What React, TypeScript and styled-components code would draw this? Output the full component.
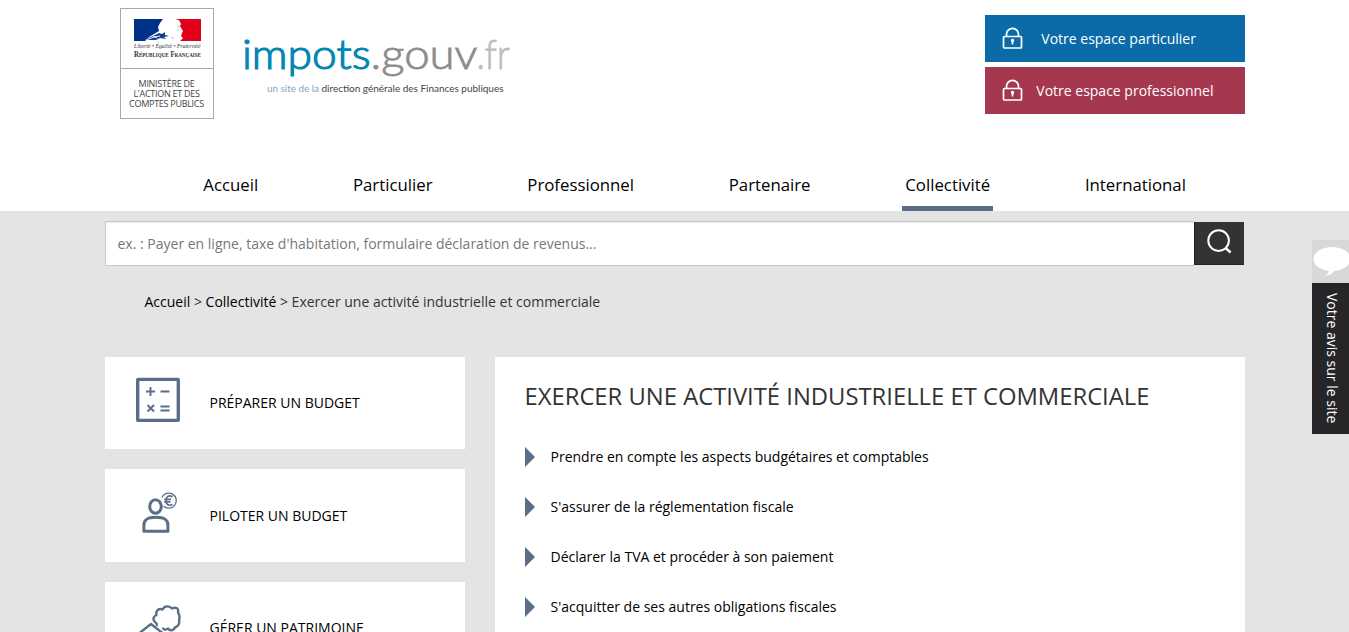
import React from "react";
import styled, { createGlobalStyle } from "styled-components";

const slate = "#5a6e87";

const GlobalStyle = createGlobalStyle`
  * { box-sizing: border-box; }
  body { margin: 0; background: #e4e4e4; color: #333; font: 14px/20px "Open Sans", sans-serif; overflow: hidden; }
  a { color: #000; text-decoration: none; }
  ul { list-style: none; margin: 0; padding: 0; }
  svg { display: block; overflow: visible; }
`;

const Page = styled.div`
  height: 632px;
  overflow: hidden;
  position: relative;
`;

const Header = styled.header`
  height: 211px;
  padding: 8px 104px 0 120px;
  background: #fff;
  display: flex;
  flex-direction: column;
  justify-content: space-between;
`;

const Banner = styled.div`
  display: flex;
  align-items: flex-start;
`;

const Ministry = styled.div`
  width: 94px;
  height: 111px;
  border: 1px solid #a9a9a9;
`;

const Emblem = styled.div`
  height: 60px;
  padding: 10px 0 0 13px;
  border-bottom: 1px solid #a9a9a9;
`;

const MinistryName = styled.div`
  padding: 10px 1px 0 0;
  text-align: center;
  font-size: 9px;
  line-height: 10px;
  letter-spacing: -0.28px;
  color: #444;
`;

const SiteLogo = styled.div`
  margin: 22px 0 0 24px;
`;

const Spaces = styled.div`
  margin: 7px 0 0 auto;
  display: flex;
  flex-direction: column;
  gap: 5px;
`;

const SpaceLink = styled.a<{ $color: string; $gap: number }>`
  width: 260px;
  height: 47px;
  padding-left: 17px;
  display: flex;
  align-items: center;
  gap: ${(p) => p.$gap}px;
  background: ${(p) => p.$color};
  color: #fff;
`;

const Nav = styled.nav`
  padding-left: 80.3px;
  display: flex;
  gap: 88.75px;
`;

const NavLink = styled.a<{ $active?: boolean }>`
  height: 38px;
  padding: 0 3px;
  font-size: 16.8px;
  line-height: 24px;
  border-bottom: 5px solid ${(p) => (p.$active ? slate : "transparent")};
`;

const Main = styled.main`
  padding: 10px 104px 0 105px;
`;

const Search = styled.form`
  display: flex;
  height: 45px;
  width: 1139px;
`;

const SearchInput = styled.input`
  flex: 1;
  padding: 0 11.5px;
  border: 1px solid #c8c8c8;
  border-right: 0;
  background: #fff;
  box-shadow: inset 0 1px 1px rgba(0, 0, 0, 0.08);
  font: 14px "Open Sans", sans-serif;
  &::placeholder { color: #777; opacity: 1; }
`;

const SearchButton = styled.button`
  width: 50px;
  height: 43px;
  margin-top: 1px;
  padding: 0 0 2px 12px;
  border: 1px solid #222;
  border-width: 0 0 1px 1px;
  background: #333;
`;

const Breadcrumb = styled.div`
  margin: 26px 0 45px 39.5px;
`;

const Columns = styled.div`
  display: flex;
  align-items: flex-start;
  gap: 30px;
`;

const Sidebar = styled.aside`
  width: 360px;
  display: flex;
  flex-direction: column;
  gap: 20px;
`;

const Card = styled.a<{ $height: number }>`
  height: ${(p) => p.$height}px;
  padding-left: 30px;
  display: flex;
  gap: 28.5px;
  background: #fff;
`;

const CardIcon = styled.div`
  width: 46px;
  padding-top: 20px;
`;

const CardLabel = styled.span<{ $top: number }>`
  padding-top: ${(p) => p.$top}px;
`;

const Content = styled.section`
  width: 750px;
  height: 400px;
  padding: 23px 30px 0 29.5px;
  background: #fff;
`;

const Title = styled.h1`
  margin: 0 0 34px;
  font-size: 23.8px;
  line-height: 33px;
  font-weight: 400;
  white-space: nowrap;
`;

const TopicList = styled.ul`
  display: flex;
  flex-direction: column;
  gap: 30px;
`;

const Topic = styled.li`
  display: flex;
  align-items: center;
  gap: 15.5px;
  height: 20px;
  padding-left: 0.5px;
  &::before {
    content: "";
    border-left: 10px solid ${slate};
    border-top: 10px solid transparent;
    border-bottom: 10px solid transparent;
  }
`;

const Feedback = styled.a`
  position: absolute;
  top: 240px;
  right: 0;
  width: 37px;
  height: 194px;
  overflow: hidden;
  display: flex;
  flex-direction: column;
  background: #262628;
`;

const FeedbackIcon = styled.div`
  height: 43px;
  background: #d8d8d8;
`;

const FeedbackLabel = styled.span`
  height: 151px;
  width: 37px;
  padding: 10px 0 0 1px;
  writing-mode: vertical-rl;
  line-height: 34px;
  color: #fff;
  white-space: nowrap;
`;

const Flag = () => (
  <svg width="68" height="42" viewBox="0 0 68 42">
    <path fill="#003189" d="M0 0h29l-3 4-2 4 1 4-5 3-5 3-4 4H0z" />
    <path fill="#e1001a" d="M41 0h26v22H46l3-3-2-2 1-3 1-2-3-5 1-2-2-4z" />
    <path fill="#12408f" d="m10 21 9-4 6-3 3 1 3-2v3l4 1-5 1 2 2-6-1-4 2z" />
    <path fill="none" stroke="#fff" strokeWidth=".9" d="m12 21 8-3 6-1M19 17l4 2" />
    <path fill="none" stroke="#a8a8a8" strokeWidth=".7" d="m43 8 3-1M43 11h2M37 18l3 2" />
    <text x="0" y="29" textLength="66.500" lengthAdjust="spacingAndGlyphs" fontFamily="Liberation Serif, serif" fontStyle="italic" fontSize="6.500" fill="#333">Liberté • Égalité • Fraternité</text>
    <text x="0" y="38" textLength="67" lengthAdjust="spacingAndGlyphs" fontFamily="Liberation Serif, serif" fontWeight="bold" fontSize="8" fill="#333" style={{ fontVariantCaps: "small-caps" }}>République Française</text>
  </svg>
);

const Wordmark = () => (
  <svg width="275" height="70" viewBox="0 0 275 70" fontFamily="Lato, sans-serif">
    <g fontSize="42" fontWeight="300">
      <text x="4" y="38.800" textLength="128.500" lengthAdjust="spacingAndGlyphs" fill="#0087b3" stroke="#0087b3" strokeWidth="1.200">impots</text>
      <text x="132.500" y="38.800" textLength="107" lengthAdjust="spacingAndGlyphs" fill="#8c8c8c" stroke="#8c8c8c" strokeWidth=".8">.gouv</text>
      <text x="238.500" y="38.800" textLength="33" lengthAdjust="spacingAndGlyphs" fill="#bcbcbc" stroke="#bcbcbc" strokeWidth=".8">.fr</text>
    </g>
    <g fontSize="9.5">
      <text x="29" y="61.5" textLength="52" lengthAdjust="spacingAndGlyphs" fill="#7fa5c0">un site de la</text>
      <text x="83.500" y="61.500" textLength="182" lengthAdjust="spacingAndGlyphs" fill="#444">direction générale des Finances publiques</text>
    </g>
  </svg>
);

const LockIcon = () => (
  <svg width="22" height="24" viewBox="0 0 22 24" fill="none" stroke="#fff" strokeWidth="1.7">
    <rect x="1.500" y="9.500" width="18" height="11.500" rx="1" />
    <path d="M4.500 9.500V7.500a6 6.200 0 0 1 12 0v2" />
    <circle cx="10.500" cy="13.500" r=".9" fill="#fff" />
    <path d="M10.500 14v3.500" />
  </svg>
);

const SearchIcon = () => (
  <svg width="26" height="26" viewBox="0 0 26 26" fill="none" stroke="#fff" strokeWidth="2">
    <circle cx="11.600" cy="11.600" r="10.300" />
    <path d="m18.600 19 5 4.500" strokeWidth="2.400" />
  </svg>
);

const CalculatorIcon = () => (
  <svg width="46" height="46" viewBox="0 0 46 46" fill="none" stroke={slate}>
    <rect x="2.700" y="2.400" width="40.600" height="41" rx=".5" strokeWidth="3.400" />
    <path strokeWidth="1.900" d="M11 14.500h9M15.500 10v9M25.500 14.500h9M12.500 28l6.500 6.500M19 28l-6.500 6.500M25.500 29.500h9M25.500 33.500h9" />
  </svg>
);

const PersonIcon = () => (
  <svg width="46" height="46" viewBox="0 0 46 46" fill="none" stroke={slate}>
    <ellipse cx="20.500" cy="17.500" rx="5.800" ry="6.800" strokeWidth="3" />
    <path strokeWidth="3" d="M8.900 42.300v-6c0-6 4-8 12-8s12 2 12 8v6z" strokeLinejoin="round" />
    <path strokeWidth="1.300" d="M26.800 8.500A7.600 7.500 0 1 1 28.500 17" />
    <path strokeWidth="1.700" d="M37.500 7.800c-3.500-2.300-6.500-.3-6.500 3.700s3 6 6.500 3.700M29.200 10.300h6.800M29.200 12.800h6.300" />
  </svg>
);

const EstateIcon = () => (
  <svg width="50" height="48" viewBox="0 0 50 48" fill="none" stroke={slate} strokeWidth="2.400" strokeLinejoin="round">
    <path d="M21.500 24c1-2 .5-2-1.500-4-3-3-1-6 1.500-7-1-4 2-7 6-5.500 2-4 7-4 9.500-1 4-2 7 0 6 4 2 3 2 5 1 7 1 4-1 7-4 8-1 3-5 4-7 1-2 2-5 1-5-1" />
    <path d="m2 33 14-11 14 11M6 30v16h20V30" />
  </svg>
);

const BubbleIcon = () => (
  <svg width="37" height="43" viewBox="0 0 37 43">
    <ellipse cx="20" cy="19" rx="18.500" ry="12" fill="#fff" />
    <path fill="#fff" d="M17 28c0 4-1 6-3.500 8 5-1 8-3 9.500-7z" />
  </svg>
);

const navItems = ["Accueil", "Particulier", "Professionnel", "Partenaire", "Collectivité", "International"];

const cards = [
  { label: "PRÉPARER UN BUDGET", Icon: CalculatorIcon, height: 92, top: 36 },
  { label: "PILOTER UN BUDGET", Icon: PersonIcon, height: 93, top: 37 },
  { label: "GÉRER UN PATRIMOINE", Icon: EstateIcon, height: 93, top: 36 },
];

const topics = [
  "Prendre en compte les aspects budgétaires et comptables",
  "S'assurer de la réglementation fiscale",
  "Déclarer la TVA et procéder à son paiement",
  "S'acquitter de ses autres obligations fiscales",
];

export default function App() {
  return (
    <Page>
      <GlobalStyle />
      <Header>
        <Banner>
          <Ministry>
            <Emblem><Flag /></Emblem>
            <MinistryName>MINISTÈRE DE<br />L'ACTION ET DES<br />COMPTES PUBLICS</MinistryName>
          </Ministry>
          <SiteLogo><Wordmark /></SiteLogo>
          <Spaces>
            <SpaceLink $color="#0b6ba8" $gap={17.3}><LockIcon />Votre espace particulier</SpaceLink>
            <SpaceLink $color="#a5384f" $gap={12.3}><LockIcon />Votre espace professionnel</SpaceLink>
          </Spaces>
        </Banner>
        <Nav>
          {navItems.map((item) => (
            <NavLink key={item} $active={item === "Collectivité"}>{item}</NavLink>
          ))}
        </Nav>
      </Header>
      <Main>
        <Search>
          <SearchInput placeholder="ex. : Payer en ligne, taxe d'habitation, formulaire déclaration de revenus..." />
          <SearchButton type="button" aria-label="Rechercher"><SearchIcon /></SearchButton>
        </Search>
        <Breadcrumb>
          <a>Accueil</a> &gt; <a>Collectivité</a> &gt; Exercer une activité industrielle et commerciale
        </Breadcrumb>
        <Columns>
          <Sidebar>
            {cards.map(({ label, Icon, height, top }) => (
              <Card key={label} $height={height}>
                <CardIcon><Icon /></CardIcon>
                <CardLabel $top={top}>{label}</CardLabel>
              </Card>
            ))}
          </Sidebar>
          <Content>
            <Title>EXERCER UNE ACTIVITÉ INDUSTRIELLE ET COMMERCIALE</Title>
            <TopicList>
              {topics.map((topic) => (
                <Topic key={topic}><a>{topic}</a></Topic>
              ))}
            </TopicList>
          </Content>
        </Columns>
      </Main>
      <Feedback>
        <FeedbackIcon><BubbleIcon /></FeedbackIcon>
        <FeedbackLabel>Votre avis sur le site</FeedbackLabel>
      </Feedback>
    </Page>
  );
}
